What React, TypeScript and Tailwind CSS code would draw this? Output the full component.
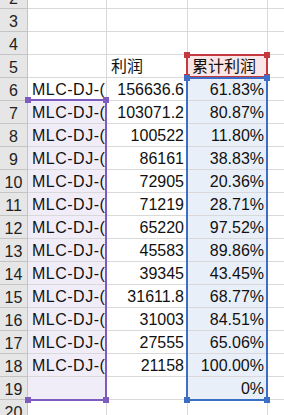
import React from 'react';

const rows = [
  { n: 2 },
  { n: 3 },
  { n: 4 },
  { n: 5, b: '利润', c: '累计利润', head: true },
  { n: 6, a: 'MLC-DJ-(', b: '156636.6', c: '61.83%' },
  { n: 7, a: 'MLC-DJ-(', b: '103071.2', c: '80.87%' },
  { n: 8, a: 'MLC-DJ-(', b: '100522', c: '11.80%' },
  { n: 9, a: 'MLC-DJ-(', b: '86161', c: '38.83%' },
  { n: 10, a: 'MLC-DJ-(', b: '72905', c: '20.36%' },
  { n: 11, a: 'MLC-DJ-(', b: '71219', c: '28.71%' },
  { n: 12, a: 'MLC-DJ-(', b: '65220', c: '97.52%' },
  { n: 13, a: 'MLC-DJ-(', b: '45583', c: '89.86%' },
  { n: 14, a: 'MLC-DJ-(', b: '39345', c: '43.45%' },
  { n: 15, a: 'MLC-DJ-(', b: '31611.8', c: '68.77%' },
  { n: 16, a: 'MLC-DJ-(', b: '31003', c: '84.51%' },
  { n: 17, a: 'MLC-DJ-(', b: '27555', c: '65.06%' },
  { n: 18, a: 'MLC-DJ-(', b: '21158', c: '100.00%' },
  { n: 19, c: '0%' },
  { n: 20 },
];

// formula reference box with its four corner squares
function RefBox({ className, fill, line }: { className: string; fill: string; line: string }) {
  const sq = `absolute w-[6px] h-[6px] ${fill}`;
  return (
    <div className={`absolute ${className}`}>
      <div className={`absolute inset-0 border-2 ${line}`} />
      <div className={`${sq} -top-[2px] -left-[2px]`} />
      <div className={`${sq} -top-[2px] -right-[2px]`} />
      <div className={`${sq} -bottom-[2px] -left-[2px]`} />
      <div className={`${sq} -bottom-[2px] -right-[2px]`} />
    </div>
  );
}

export default function App() {
  return (
    <div
      className="relative w-[284px] h-[415px] overflow-hidden bg-white text-[16px] text-[#111]"
      style={{ fontFamily: '"Liberation Sans", "Noto Sans CJK SC", sans-serif' }}
    >
      <div className="-mt-[14px] grid grid-cols-[28px_79px_81px_80px_1fr]">
        {rows.map((r) => {
          const purple = r.n >= 7 && r.n <= 19;
          const blue = r.n >= 6 && r.n <= 19;
          return (
            <React.Fragment key={r.n}>
              <div className="h-[23px] flex items-center justify-center bg-[#e6e6e6] border-r border-b border-[#c4c4c4] text-[#222] leading-none pt-[3px]">
                {r.n}
              </div>
              <div className={`h-[23px] flex items-center pl-[4px] pt-[2px] overflow-hidden whitespace-nowrap tracking-[0.5px] border-r border-b border-[#d9d9d9] leading-none ${purple ? 'bg-[#f0edf8]' : ''}`}>
                {r.a}
              </div>
              <div className={`h-[23px] flex items-center ${r.head ? 'justify-start pl-[4px]' : 'justify-end pr-[3px]'} pt-[2px] whitespace-nowrap border-r border-b border-[#d9d9d9] leading-none`}>
                {r.b}
              </div>
              <div className={`h-[23px] flex items-center ${r.head ? 'justify-start pl-[4px] bg-[#fbe6e7]' : 'justify-end pr-[3px]'} ${blue ? 'bg-[#e9eff8]' : ''} pt-[2px] whitespace-nowrap border-r border-b border-[#d9d9d9] leading-none`}>
                {r.c}
              </div>
              <div className="h-[23px] border-b border-[#d9d9d9]" />
            </React.Fragment>
          );
        })}
      </div>

      {/* A7:A19 */}
      <RefBox className="left-[27px] top-[99px] w-[80px] h-[302px]" fill="bg-[#7e5bbf]" line="border-[#7e5bbf] border-l-0" />
      {/* C5 */}
      <RefBox className="left-[186px] top-[54px] w-[82px] h-[24px]" fill="bg-[#c4383f]" line="border-[#c4383f]" />
      {/* C6:C19 */}
      <RefBox className="left-[186px] top-[77px] w-[82px] h-[324px]" fill="bg-[#3b6ec4]" line="border-[#3b6ec4]" />
    </div>
  );
}
